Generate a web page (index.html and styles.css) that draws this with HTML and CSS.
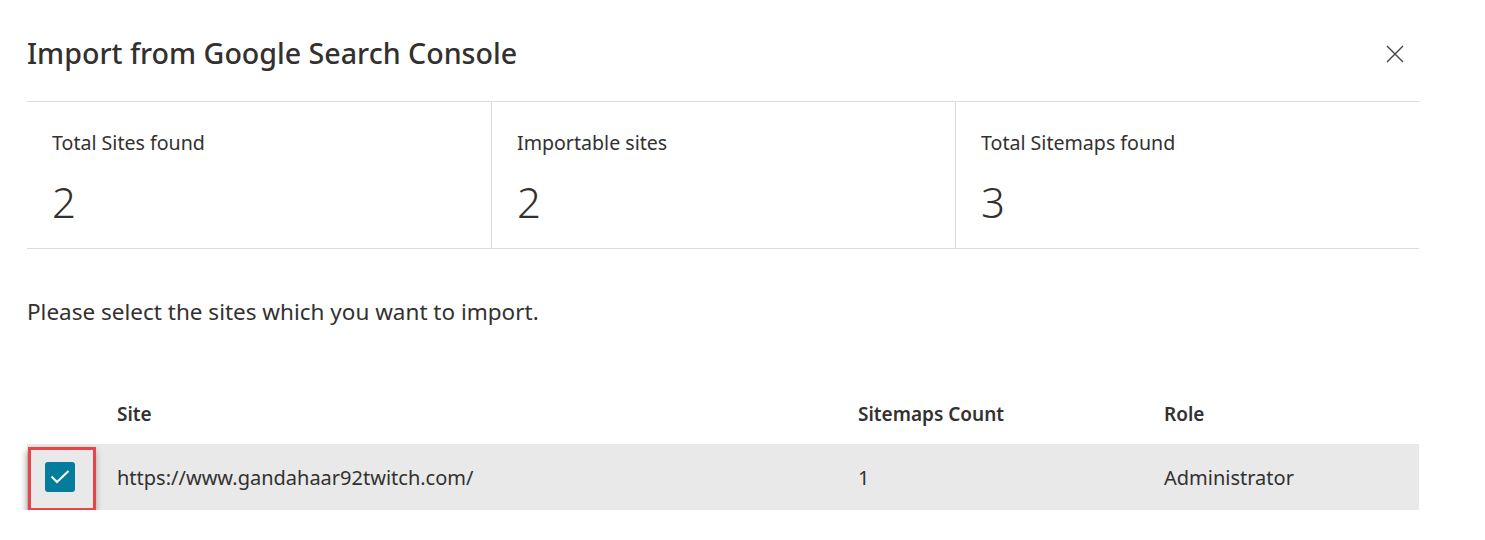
FILE: index.html
```html
<!DOCTYPE html>
<html lang="en">
<head>
    <meta charset="UTF-8">
    <meta name="viewport" content="width=device-width, initial-scale=1.0">
    <title>Import from Google Search Console</title>
    <link rel="stylesheet" href="styles.css">
</head>
<body>
    <div class="dialog">
        <div class="dialog-header">
            <h1>Import from Google Search Console</h1>
            <button class="close-btn" aria-label="Close">
                <svg width="18" height="18" viewBox="0 0 18 18">
                    <path d="M1 1 L17 17 M17 1 L1 17" stroke="#444" stroke-width="1.4" fill="none"/>
                </svg>
            </button>
        </div>

        <div class="stats">
            <div class="stat">
                <div class="stat-label">Total Sites found</div>
                <div class="stat-value">2</div>
            </div>
            <div class="stat">
                <div class="stat-label">Importable sites</div>
                <div class="stat-value">2</div>
            </div>
            <div class="stat">
                <div class="stat-label">Total Sitemaps found</div>
                <div class="stat-value">3</div>
            </div>
        </div>

        <p class="hint">Please select the sites which you want to import.</p>

        <div class="sites-table">
            <div class="row head">
                <div class="cell check"></div>
                <div class="cell site">Site</div>
                <div class="cell count">Sitemaps Count</div>
                <div class="cell role">Role</div>
            </div>
            <div class="row selected">
                <div class="cell check">
                    <span class="highlight"></span>
                    <span class="checkbox">
                        <svg width="20" height="14" viewBox="0 0 20 14">
                            <path d="M1.5 6.5 L7 12 L18.5 1" stroke="#fff" stroke-width="2" fill="none"/>
                        </svg>
                    </span>
                </div>
                <div class="cell site">https://www.gandahaar92twitch.com/</div>
                <div class="cell count">1</div>
                <div class="cell role">Administrator</div>
            </div>
        </div>
    </div>
</body>
</html>
```

FILE: styles.css
```css
body {
    font-family: "Noto Sans", "Open Sans", sans-serif;
    background-color: #fff;
    color: #323130;
    margin: 0;
    padding: 0;
}

.dialog {
    width: 1392px;
    padding: 0 0 0 27px;
}

.dialog-header {
    display: flex;
    align-items: center;
    justify-content: space-between;
    height: 102px;
    border-bottom: 1px solid #dcdcdc;
    box-sizing: border-box;
}

h1 {
    font-size: 28.6px;
    font-weight: 500;
    margin: 4px 0 0 0;
    color: #323130;
}

.close-btn {
    background: none;
    border: none;
    padding: 0;
    margin: 6px 15px 0 0;
    width: 18px;
    height: 18px;
    cursor: pointer;
}

.stats {
    display: grid;
    grid-template-columns: repeat(3, 1fr);
    border-bottom: 1px solid #dcdcdc;
}

.stat {
    height: 146px;
    padding: 28px 25px 0;
    box-sizing: border-box;
    border-left: 1px solid #dcdcdc;
}

.stat:first-child {
    border-left: none;
}

.stat-label {
    font-size: 19.6px;
    font-weight: 400;
    line-height: 26px;
}

.stat-value {
    font-size: 42px;
    font-weight: 300;
    margin-top: 22px;
    line-height: 48px;
}

.hint {
    font-size: 22.5px;
    margin: 48px 0 0 0;
    line-height: 30px;
}

.sites-table {
    margin-top: 65px;
}

.row {
    display: flex;
    align-items: center;
    font-size: 20px;
}

.row.head {
    height: 44px;
    font-size: 19px;
    font-weight: 600;
    padding-bottom: 8px;
}

.row.selected {
    height: 66px;
    background-color: #e9e9e9;
}

.cell.check {
    width: 90px;
    height: 100%;
    position: relative;
    display: flex;
    align-items: center;
    justify-content: center;
    box-sizing: border-box;
    padding-right: 24px;
}

.cell.site {
    width: 741px;
}

.cell.count {
    width: 306px;
}

.checkbox {
    width: 30px;
    height: 30px;
    border-radius: 3px;
    background-color: #047c9c;
    display: flex;
    align-items: center;
    justify-content: center;
}

.highlight {
    position: absolute;
    left: 1px;
    top: 3px;
    width: 68px;
    height: 64px;
    border: 3px solid #e8454b;
    box-sizing: border-box;
    box-shadow: -1px 4px 7px rgba(0, 0, 0, 0.4);
}
```
